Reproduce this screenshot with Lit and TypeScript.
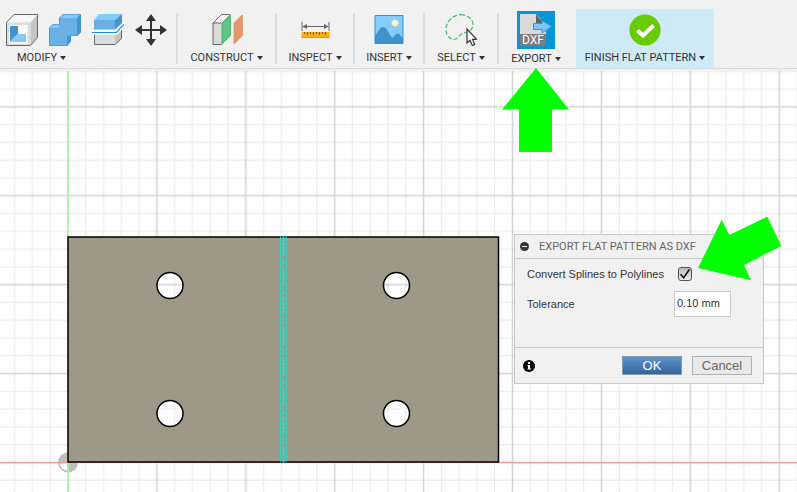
import { LitElement, html, css, svg } from "lit";
import { customElement, property, state } from "lit/decorators.js";

const icons: Record<string, unknown> = {
  shell: svg`<svg viewBox="0 0 32 32" width="32" height="32" aria-hidden="true">
    <path d="M.5 8.5 8 .5H31.5L24.5 8.5Z" fill="#f7f7f7"/>
    <path d="M24.5 8.5 31.5 .5V23.5L24.5 31.5Z" fill="#c4c4c4"/>
    <path d="M.5 8.5H24.5V31.5H.5Z" fill="#dcdcdc"/>
    <path d="M3 11H21.5V29.5H3Z" fill="#fff"/>
    <path d="M4 12H12V20L4 28Z" fill="#4394cf"/>
    <path d="M12 20H20V28H4Z" fill="#82caff"/>
    <path d="M.5 8.5 8 .5H31.5V23.5L24.5 31.5H.5Z" fill="none" stroke="#666"/>
  </svg>`,
  combine: svg`<svg viewBox="0 0 32 32" width="32" height="32" aria-hidden="true">
    <path d="M0 14 4 10H10V4L14 0H32V18L28 22H22V27L18 32H0Z" fill="#6ab0e5"/>
    <path d="M14 0H32L28 4H10ZM4 10H10V14H0Z" fill="#82caff"/>
    <path d="M32 0V18L28 22V4ZM22 22V27L18 32V22Z" fill="#4394cf"/>
    <path d="M.5 14 4 10.500H10.500V4L14 .5H31.500V18L28 21.500H21.500V27L18 31.500H.5Z" fill="none" stroke="#3b8fce" stroke-opacity=".6"/>
  </svg>`,
  split: svg`<svg viewBox="0 0 32 32" width="32" height="32" aria-hidden="true">
    <path d="M2 20.500H23V30.500H2Z" fill="#dcdcdc"/>
    <path d="M23 20.500 30 14V24.500L23 30.500Z" fill="#c4c4c4"/>
    <path d="M2.500 20V30.500H23L29.500 24.500V14" fill="none" stroke="#666"/>
    <path d="M2 6H23V15.500H2Z" fill="#6ab0e5"/>
    <path d="M2 6 7 0H30L23 6Z" fill="#82caff"/>
    <path d="M23 6 30 0V9L23 15.500Z" fill="#4394cf"/>
    <path d="M0 18.500H24.500L32 10.500" fill="none" stroke="#fff" stroke-width="4"/>
    <path d="M0 18.500H24.500L31.700 10.500" fill="none" stroke="#1c8fe3" stroke-width="1.200"/>
  </svg>`,
  move: svg`<svg viewBox="0 0 32 32" width="32" height="32" aria-hidden="true">
    <path d="M16 4V28M4 16H28" stroke="#333" stroke-width="2"/>
    <path d="M16 0 21 7H11ZM16 32 21 25H11ZM0 16 7 11V21ZM32 16 25 11V21Z" fill="#333"/>
  </svg>`,
  construct: svg`<svg viewBox="0 0 32 32" width="32" height="32" aria-hidden="true">
    <path d="M2 9 10.500 .5H19V10L10.500 30.500H2Z" fill="#f4f4f4"/>
    <path d="M2 9H10.500V30.500H2Z" fill="#dadada"/>
    <path d="M18.500 .5H10.500L2 9V30.500H10.500M2 9H10.500" fill="none" stroke="#666"/>
    <path d="M11 9 19.300 .8V21.500L11 30Z" fill="#5fc783" stroke="#38b562"/>
    <path d="M23.200 9.200 31.200 1V21.500L23.200 29.800Z" fill="#e59a66" stroke="#d48a5b"/>
  </svg>`,
  inspect: svg`<svg viewBox="0 0 32 32" width="32" height="32" aria-hidden="true">
    <path d="M3 8V17M30 8V17M4 12.500H29" stroke="#666" fill="none"/>
    <path d="M3.500 12.500 8 10V15ZM29.500 12.500 25 10V15Z" fill="#666"/>
    <path d="M2.500 18H30.500V24H2.500Z" fill="#ffad10"/>
    <path d="M2.500 23.500H30.500" stroke="#e79a00"/>
    <path d="M5.500 18V20M8.500 18V21M11.500 18V20M14.500 18V21M17.500 18V20M20.500 18V21M23.500 18V20M26.500 18V21" stroke="#7c5810"/>
  </svg>`,
  insert: svg`<svg viewBox="0 0 32 32" width="32" height="32" aria-hidden="true">
    <path d="M2 1.500H30V29.500H2Z" fill="#85ccff"/>
    <path d="M2 22C6 17 7 13 10.500 13S16 21 19.500 24C21.500 22 23 19 25 19.500S28 23 30 24V29.500H2Z" fill="#3f92cb"/>
    <circle cx="22" cy="9" r="3.500" fill="#fffbd2" stroke="#b9c9b0" stroke-width=".7"/>
    <path d="M2 1.500H30V29.500H2Z" fill="none" stroke="#3b8fce"/>
  </svg>`,
  select: svg`<svg viewBox="0 0 32 32" width="32" height="32" aria-hidden="true">
    <path d="M15.800 .7C22 .7 28 5 28 10.500C28 16 24 18 20 18.500C15.500 19 14 23 11.500 24.800C8 27 1 24 1 15C1 7 9 .7 15.800 .7Z" fill="none" stroke="#3dba68" stroke-width="1.200" stroke-dasharray="4.500 2"/>
    <path d="M22 15V29L25 26.300 27.300 31.500 29.700 30.500 27.600 25.400H31.500Z" fill="#fff" stroke="#333" stroke-width="1.200"/>
  </svg>`,
  dxf: svg`<svg viewBox="0 0 38 38" width="38" height="38" aria-hidden="true">
    <path d="M0 0H38V38H0Z" fill="#0696d7"/>
    <path d="M3 3H19L24 8V14H29V35H3Z" fill="#d9d9d9"/>
    <path d="M19 3 24 9V13H19Z" fill="#666"/>
    <path d="M3 23H29V35H3Z" fill="#7d7d7d"/>
    <path d="M16.500 12.500H25V9.500L35 15.500 25 22V18.500H16.500Z" fill="#7cc6ff" stroke="#2b95de"/>
    <text x="16" y="33" text-anchor="middle" font-family="Roboto, sans-serif" font-size="12" fill="#fff">DXF</text>
  </svg>`,
  finish: svg`<svg viewBox="0 0 32 32" width="32" height="32" aria-hidden="true">
    <circle cx="16" cy="16" r="15.600" fill="#67cb00"/>
    <path d="M8.500 16.500 14 21.500 24.500 11.500" fill="none" stroke="#fff" stroke-width="4"/>
  </svg>`,
};

interface Group {
  name: string;
  label: string;
  tools: [icon: string, title: string][];
}

const groups: Group[] = [
  { name: "modify", label: "MODIFY", tools: [["shell", "Shell"], ["combine", "Combine"], ["split", "Split body"], ["move", "Move"]] },
  { name: "construct", label: "CONSTRUCT", tools: [["construct", "Offset plane"]] },
  { name: "inspect", label: "INSPECT", tools: [["inspect", "Measure"]] },
  { name: "insert", label: "INSERT", tools: [["insert", "Insert canvas"]] },
  { name: "select", label: "SELECT", tools: [["select", "Freeform selection"]] },
  { name: "export", label: "EXPORT", tools: [["dxf", "Export flat pattern as DXF"]] },
  { name: "finish", label: "FINISH FLAT PATTERN", tools: [["finish", "Finish flat pattern"]] },
];

@customElement("tool-group")
class ToolGroup extends LitElement {
  @property({ attribute: false }) group!: Group;

  static styles = css`
    :host { display: flex; flex-direction: column; align-items: center; padding-top: 2px; }
    .tools { display: flex; gap: 11px; align-items: center; height: 38px; }
    button { appearance: none; border: 0; margin: 0; padding: 0; background: none; color: #333; cursor: pointer; }
    .tool, .tool svg { display: block; }
    .menu { display: flex; align-items: center; gap: 3px; height: 20px; font: 11px/18px Roboto, sans-serif; white-space: nowrap; }
    .caret { border: solid transparent; border-width: 4px 3px 0; border-top-color: #333; }
    :host(.modify) .menu { align-self: flex-start; margin-left: 11px; }
  `;

  render() {
    return html`
      <div class="tools">
        ${this.group.tools.map(([icon, title]) => html`<button class="tool" aria-label=${title}>${icons[icon]}</button>`)}
      </div>
      <button class="menu" aria-haspopup="menu">${this.group.label}<span class="caret"></span></button>
    `;
  }
}

@customElement("flat-pattern-view")
class FlatPatternView extends LitElement {
  static styles = css`
    :host { display: block; background: #fff; }
    svg { display: block; width: 100%; height: 100%; }
    .minor { stroke: #000; stroke-opacity: 0.09; fill: none; }
    .major { stroke: #000; stroke-opacity: 0.17; fill: none; }
    .edge { fill: #9f9888; stroke: #000; stroke-width: 1.5; }
    .bend { stroke: #2adbc8; stroke-dasharray: 4 1; }
    .bend-center { stroke: #2adbc8; stroke-width: 2; stroke-dasharray: 20 2 6 2; }
  `;

  render() {
    const step = 17.78;
    const holes = [[102, -177], [328.5, -177], [102, -49], [328.5, -49]];
    const hole = ([x, y]: number[]) => `M${x - 13} ${y}a13 13 0 1 0 26 0a13 13 0 1 0 -26 0Z`;
    const minor = [1, 2, 3, 4].map((i) => `M${i * step} 0V88.9M0 ${i * step}H88.9`).join("");
    return html`<svg role="img" aria-label="Flat pattern of a bracket with four holes">
      <defs>
        <pattern id="grid" width="88.9" height="88.9" patternUnits="userSpaceOnUse" x="-44.450" y="-44.450">
          <g transform="translate(-44.450 -44.450)"><path class="minor" d=${minor} /></g>
          <g transform="translate(44.450 -44.450)"><path class="minor" d=${minor} /></g>
          <g transform="translate(-44.450 44.450)"><path class="minor" d=${minor} /></g>
          <g transform="translate(44.450 44.450)"><path class="minor" d=${minor} /></g>
          <path class="major" d="M44.450 0V88.9M0 44.450H88.9" stroke-width="1.500" />
        </pattern>
      </defs>
      <g transform="translate(68 391.500)">
        <rect x="-2000" y="-2000" width="6000" height="6000" fill="url(#grid)" />
        <circle r="10" fill="#bdbdbd" />
        <path d="M-1 1V8A7.500 7.500 0 0 1 -8 1Z" fill="#fff" />
        <path d="M0 -2000V2000" stroke="#a6fba0" stroke-width="1.500" />
        <path d="M-2000 0H4000" stroke="#ff9090" />
        <path class="edge" fill-rule="evenodd" d=${"M0 -225.500H430.500V-.5H0Z" + holes.map(hole).join("")} />
        <path class="bend" d="M212.500 -226V0M218.500 -226V0" />
        <path class="bend-center" d="M215.500 -226V0" />
      </g>
    </svg>`;
  }
}

@customElement("export-dialog")
class ExportDialog extends LitElement {
  @state() private convert = true;

  static styles = css`
    :host { display: block; box-sizing: border-box; border: 1px solid #c8c8c8; background: #f1f1f1; color: #333; font: 11px/16px "Liberation Sans", Arial, sans-serif; }
    form, h2 { margin: 0; }
    header { display: flex; align-items: center; gap: 10px; height: 23px; padding: 0 5px; border-bottom: 1px solid #c8c8c8; }
    h2 { font: 11px/16px Roboto, sans-serif; color: #666; white-space: nowrap; }
    button { appearance: none; margin: 0; padding: 0; cursor: pointer; }
    .icon { border: 0; background: none; }
    .icon svg { display: block; }
    .fields { display: grid; grid-template-columns: 147px 1fr; grid-auto-rows: 30px; align-items: center; padding: 0 12px; height: 88px; box-sizing: border-box; }
    .check { appearance: none; display: grid; place-items: center; box-sizing: border-box; width: 14px; height: 14px; margin: 0 0 0 4px; border: 1px solid #555; border-radius: 3px; background: linear-gradient(#b8b8b8, #ececec); }
    .check:checked::after { content: ""; width: 10px; height: 10px; background: #000; clip-path: polygon(0 58%, 12% 48%, 36% 76%, 88% 0, 100% 8%, 38% 100%); }
    .value { box-sizing: border-box; width: 57px; height: 26px; margin: 0; padding: 0 2px 2px; border: 1px solid #c8c8c8; background: #fff; color: #333; font: inherit; }
    footer { display: flex; align-items: center; gap: 10px; height: 35px; padding: 0 11px 0 8px; border-top: 1px solid #c8c8c8; }
    footer .icon { margin-right: auto; }
    .action { box-sizing: border-box; width: 60px; height: 19px; border: 1px solid #b0b0b0; background: #e9e9e9; color: #666; font: 13px/17px "Liberation Sans", Arial, sans-serif; }
    .primary { background: linear-gradient(#5b92ca, #376698); border-color: #8c9cac; color: #fff; }
  `;

  render() {
    return html`<form @submit=${(e: Event) => e.preventDefault()}>
      <header>
        <button class="icon" type="button" aria-label="Collapse">
          <svg width="9" height="9" viewBox="0 0 9 9"><circle cx="4.500" cy="4.500" r="4.500" fill="#333" /><path d="M2 4.500H7" stroke="#fff" /></svg>
        </button>
        <h2>EXPORT FLAT PATTERN AS DXF</h2>
      </header>
      <div class="fields">
        <label for="convert">Convert Splines to Polylines</label>
        <input id="convert" class="check" type="checkbox" .checked=${this.convert}
          @change=${(e: Event) => (this.convert = (e.target as HTMLInputElement).checked)} />
        <label for="tolerance">Tolerance</label>
        <input id="tolerance" class="value" type="text" value="0.10 mm" />
      </div>
      <footer>
        <button class="icon" type="button" aria-label="Information">
          <svg width="12" height="12" viewBox="0 0 12 12"><circle cx="6" cy="6" r="6" fill="#000" /><path d="M5 2H7V4H5ZM4.500 5H7V8.500H8V9.500H4.500V8.500H5V6H4.500Z" fill="#fff" /></svg>
        </button>
        <button class="action primary" type="submit">OK</button>
        <button class="action" type="button">Cancel</button>
      </footer>
    </form>`;
  }
}

@customElement("app-root")
class AppRoot extends LitElement {
  static styles = css`
    :host { display: flex; flex-direction: column; position: relative; height: 100vh; overflow: hidden; background: #f1f1f1; }
    .toolbar { display: flex; box-sizing: border-box; padding-top: 9px; height: 69px; border-bottom: 1px solid #d8d8d8; flex: none; }
    tool-group { flex: none; box-sizing: border-box; }
    .modify { padding-left: 6px; padding-right: 9px; }
    .construct { width: 97px; }
    .inspect { width: 76px; }
    .insert { width: 68px; }
    .select { width: 72px; }
    .export { width: 74px; margin-right: 3px; }
    .finish { width: 138px; background: #cdeaf6; }
    .divider { width: 2px; height: 51px; margin-top: 4px; background: #dcdcdc; flex: none; }
    .workspace { flex: 1; position: relative; min-height: 0; margin-top: 2px; }
    flat-pattern-view { height: 100%; }
    export-dialog { position: absolute; left: 514px; top: 163px; width: 250px; }
    .callouts { position: absolute; inset: 0; width: 100%; height: 100%; pointer-events: none; }
  `;

  render() {
    return html`
      <nav class="toolbar" aria-label="Tools">
        ${groups.map((g, i) => html`
          ${i > 0 && g.name !== "finish" ? html`<span class="divider"></span>` : ""}
          <tool-group class=${g.name} .group=${g}></tool-group>`)}
      </nav>
      <main class="workspace">
        <flat-pattern-view></flat-pattern-view>
        <export-dialog></export-dialog>
      </main>
      <svg class="callouts" aria-hidden="true">
        <path fill="#0f0" d="M536 68 569 109.500H552V152H519V109.500H502Z" />
        <path fill="#0f0" d="M698 268 721.700 219.700 729.300 235 767.300 216.700 781.300 246 744 265 751 280.300Z" />
      </svg>
    `;
  }
}
